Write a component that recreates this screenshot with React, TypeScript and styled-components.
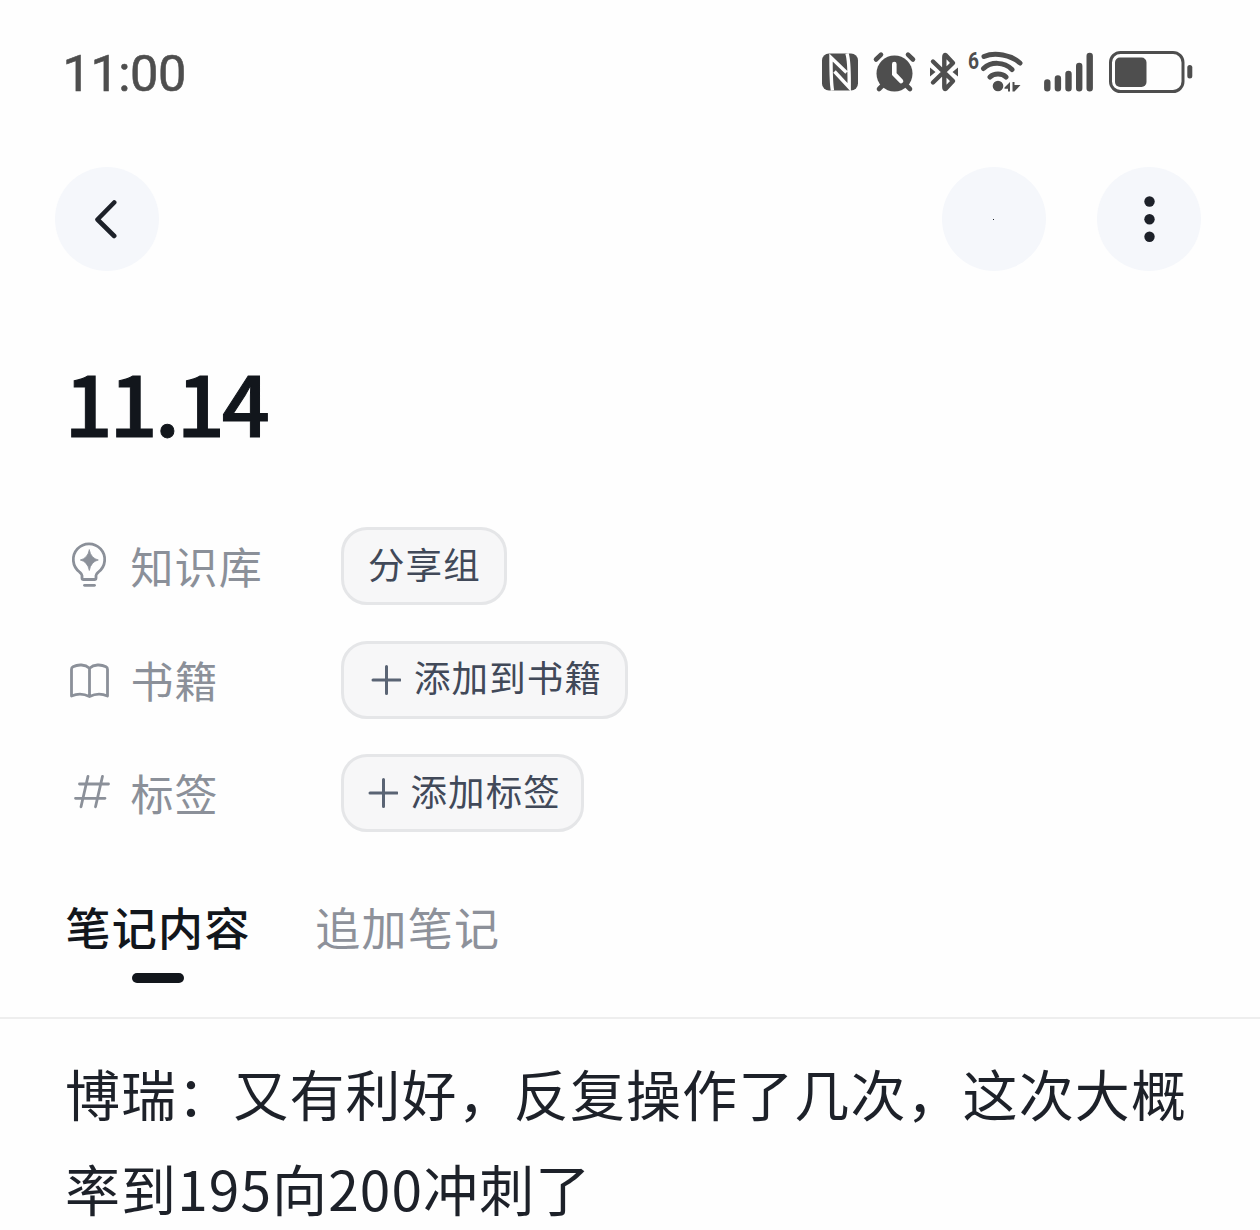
import React from 'react';
import styled, { createGlobalStyle } from 'styled-components';

const GlobalStyle = createGlobalStyle`
  *, *::before, *::after { box-sizing: border-box; }
  body { margin: 0; background: #fefefe; }
`;

const Screen = styled.div`
  width: 1260px;
  height: 1230px;
  overflow: hidden;
  display: flex;
  flex-direction: column;
  background: #fefefe;
  font-family: 'Noto Sans CJK SC', sans-serif;
  & > * { flex-shrink: 0; }
`;

const StatusBar = styled.header`
  height: 144px;
  padding: 0 67px 0 62.5px;
  display: flex;
  align-items: center;
  justify-content: space-between;
  color: #4e4e4e;
`;

const Clock = styled.span`
  font-family: Roboto, sans-serif;
  font-size: 50.5px;
  line-height: 60px;
  letter-spacing: -0.5px;
  margin-top: 4px;
  -webkit-text-stroke: 0.6px #4e4e4e;
`;

const StatusIcons = styled.div`
  display: flex;
  align-items: center;
`;

const Glyph = styled.svg<{ $ml?: number }>`
  display: block;
  flex: none;
  overflow: visible;
  margin-left: ${(p) => p.$ml ?? 0}px;
`;

const NavBar = styled.nav`
  height: 104px;
  margin-top: 23px;
  padding: 0 59px 0 55px;
  display: flex;
  gap: 51.5px;
`;

const RoundButton = styled.button`
  width: 104px;
  height: 104px;
  padding: 0;
  border: 0;
  border-radius: 50%;
  background: #f5f7fb;
  display: flex;
  align-items: center;
  justify-content: center;
  &:first-child { margin-right: auto; }
`;

const Speck = styled.span`
  width: 1px;
  height: 1px;
  background: #1d2129;
`;

const Title = styled.h1`
  margin: 69px 0 0 64.5px;
  height: 120px;
  font-size: 84.5px;
  line-height: 120px;
  font-weight: 500;
  letter-spacing: -3.1px;
  color: #12161c;
  -webkit-text-stroke: 1px #12161c;
`;

const Properties = styled.section`
  margin-top: 67px;
  padding-left: 66px;
  display: flex;
  flex-direction: column;
  gap: 35.6px;
`;

const Property = styled.div`
  display: flex;
  align-items: center;
  height: 78px;
`;

const IconSlot = styled.span`
  width: 46px;
  height: 78px;
  display: flex;
  align-items: center;
  justify-content: center;
`;

const Label = styled.span`
  width: 210.5px;
  margin-left: 18.5px;
  padding-bottom: 2px;
  font-size: 43px;
  line-height: 62px;
  letter-spacing: 1.1px;
  color: #8b9099;
`;

const Chip = styled.button<{ $w: number; $pad: number }>`
  width: ${(p) => p.$w}px;
  height: 78px;
  padding: 0 0 5px ${(p) => p.$pad}px;
  border: 3px solid #e5e6e8;
  border-radius: 26px;
  background: #f7f7f8;
  display: flex;
  align-items: center;
  font-family: inherit;
  font-size: 36.5px;
  letter-spacing: 1.1px;
  line-height: 54px;
  color: #414959;
  white-space: nowrap;
`;

const PlusIcon = styled.svg`
  display: block;
  margin: 5px 13px 0 -1px;
`;

const Tabs = styled.div`
  height: 186.8px;
  padding: 61.4px 0 0 65.5px;
  display: flex;
  gap: 64.5px;
  border-bottom: 2px solid #eeeeee;
`;

const Tab = styled.div<{ $active?: boolean }>`
  display: flex;
  flex-direction: column;
  align-items: center;
  font-size: 45px;
  line-height: 66px;
  letter-spacing: 1.3px;
  font-weight: ${(p) => (p.$active ? 500 : 400)};
  color: ${(p) => (p.$active ? '#12161c' : '#8d919a')};
`;

const Indicator = styled.span`
  width: 52px;
  height: 10px;
  margin-top: 13.2px;
  border-radius: 5px;
  background: #12161c;
`;

const Note = styled.p`
  margin: 26px 60px 0 65px;
  font-size: 55px;
  line-height: 95px;
  letter-spacing: 1.1px;
  color: #1d2129;
`;

const NfcIcon = () => (
  <Glyph width="36" height="38" viewBox="0 0 36 38">
    <rect x="0" y="0.5" width="36" height="37" rx="7" fill="currentColor" />
    <path d="M10.500 37.500C9 30 9 15 9 4.500L24.500 19.500M25 0.500C27.500 8 27.200 22 27.200 34.500L12.500 18.500" fill="none" stroke="#fefefe" strokeWidth="3.400" />
  </Glyph>
);

const AlarmIcon = () => (
  <Glyph $ml={16} width="41" height="40" viewBox="0 0 41 40" fill="none" stroke="currentColor" strokeLinecap="round">
    <circle cx="20.5" cy="21.5" r="18" fill="currentColor" stroke="none" />
    <path d="M2 7.500 7 2.700M39 7.500 34 2.700M5 37 9 33M36 37 32 33" strokeWidth="4.600" />
    <path d="M20.300 12V22L27 29" stroke="#fefefe" strokeWidth="4.600" />
  </Glyph>
);

const BluetoothIcon = () => (
  <Glyph $ml={15} width="28" height="40" viewBox="0 0 28 40" fill="none" stroke="currentColor" strokeLinecap="round" strokeLinejoin="round">
    <path d="M3 9.500 23 29 16 36.500Q14.300 38 14.300 35V5Q14.300 2 16 3.500L23 11 3 30.500" strokeWidth="4.400" />
    <path d="M0 15.500 5.500 20 0 24.500ZM28 15.500 22.500 20 28 24.500Z" fill="currentColor" stroke="none" />
  </Glyph>
);

const WifiIcon = () => (
  <Glyph $ml={10} width="55" height="42" viewBox="0 0 55 42" fill="none" stroke="currentColor" strokeLinecap="round">
    <text x="0" y="18" fontFamily="Roboto, sans-serif" fontSize="23.500" fontWeight="700" textLength="11" lengthAdjust="spacingAndGlyphs" fill="currentColor" stroke="none">6</text>
    <path d="M16 5.500C27 1 43 4 52 12M15.500 17.500C23 10.500 36 10.500 44 18.500M22 26C26 22 34 22 38 26" strokeWidth="5" />
    <circle cx="30" cy="35" r="5.300" fill="currentColor" stroke="none" />
    <path d="M36.500 36.500 42 31V40.500H40V37.800H36.500ZM44.500 31H46.500V34H52.500L46.500 40.500H44.500Z" fill="currentColor" stroke="none" />
  </Glyph>
);

const SignalIcon = () => (
  <Glyph $ml={21} width="49" height="40" viewBox="0 0 49 40" stroke="currentColor" strokeWidth="6.4" strokeLinecap="round">
    <path d="M3.300 30.500V36.300M13.900 26.500V36.300M24.500 22V36.300M35.200 14V36.300M45.700 4V36.300" />
  </Glyph>
);

const BatteryIcon = () => (
  <Glyph $ml={16} width="84" height="42" viewBox="0 0 84 42" fill="currentColor">
    <rect x="1.500" y="1.500" width="72.500" height="39" rx="10" fill="none" stroke="currentColor" strokeWidth="3" />
    <rect x="6" y="6.500" width="31.500" height="29.500" rx="5" />
    <rect x="78.300" y="14" width="5" height="13.500" rx="2.500" />
  </Glyph>
);

const BackIcon = () => (
  <svg width="30" height="40" viewBox="0 0 30 40">
    <path d="M22.200 3.500 5.500 20.500 22.200 37" fill="none" stroke="#1d2129" strokeWidth="4.600" strokeLinecap="round" strokeLinejoin="round" />
  </svg>
);

const MoreIcon = () => (
  <svg width="12" height="46" viewBox="0 0 12 46" fill="#1d2129">
    <circle cx="6.500" cy="5.500" r="5.200" />
    <circle cx="6.500" cy="23.200" r="5.200" />
    <circle cx="6.500" cy="40.700" r="5.200" />
  </svg>
);

const BulbIcon = () => (
  <svg width="46" height="50" viewBox="0 0 46 50" fill="none" stroke="#8b9099" strokeWidth="2.800" strokeLinecap="round" strokeLinejoin="round">
    <path d="M17.500 38.500Q16 38.500 16 37V34.500C16 33 15 32.300 13.500 31A15.700 15.700 0 1 1 32.500 31C31 32.300 30 33 30 34.500V37Q30 38.500 28.500 38.500Z" />
    <path d="M18.500 44.300H28.500" />
    <path d="M23.300 9Q25 17.300 32.300 19Q25 20.700 23.300 29.500Q21.600 20.700 14.300 19Q21.600 17.300 23.300 9Z" fill="#8b9099" stroke="#8b9099" strokeWidth="0.800" />
  </svg>
);

const BookIcon = () => (
  <svg width="46" height="40" viewBox="0 0 46 40" fill="none" stroke="#8b9099" strokeWidth="2.800" strokeLinecap="round" strokeLinejoin="round">
    <path d="M23.500 8.200C19 4.200 12 4.200 7 6.700Q5.500 7.500 5.500 9.200V36Q14.500 32 23.500 36.500Q32.500 32 41.500 36V9.200Q41.500 7.500 40 6.700C35 4.200 28 4.200 23.500 8.200V36.500" />
  </svg>
);

const HashIcon = () => (
  <svg width="46" height="40" viewBox="0 0 46 40" fill="none" stroke="#8b9099" strokeWidth="2.800" strokeLinecap="round">
    <path d="M13.500 11H42.500M9.500 25.300H39M22 3.300 15 33.800M36.500 3.300 29.500 33.800" />
  </svg>
);

const Plus = () => (
  <PlusIcon width="30" height="30" viewBox="0 0 30 30">
    <path d="M2 15H29M15.500 1.500V28.500" stroke="#5a6474" strokeWidth="3" strokeLinecap="round" />
  </PlusIcon>
);

const properties = [
  { label: '知识库', value: '分享组', Icon: BulbIcon, add: false, width: 166, pad: 24 },
  { label: '书籍', value: '添加到书籍', Icon: BookIcon, add: true, width: 287, pad: 28 },
  { label: '标签', value: '添加标签', Icon: HashIcon, add: true, width: 242.5, pad: 24.5 },
];

export default function App() {
  return (
    <Screen>
      <GlobalStyle />
      <StatusBar>
        <Clock>11:00</Clock>
        <StatusIcons>
          <NfcIcon />
          <AlarmIcon />
          <BluetoothIcon />
          <WifiIcon />
          <SignalIcon />
          <BatteryIcon />
        </StatusIcons>
      </StatusBar>
      <NavBar>
        <RoundButton><BackIcon /></RoundButton>
        <RoundButton><Speck /></RoundButton>
        <RoundButton><MoreIcon /></RoundButton>
      </NavBar>
      <Title>11.14</Title>
      <Properties>
        {properties.map(({ label, value, Icon, add, width, pad }) => (
          <Property key={label}>
            <IconSlot><Icon /></IconSlot>
            <Label>{label}</Label>
            <Chip $w={width} $pad={pad}>
              {add && <Plus />}
              {value}
            </Chip>
          </Property>
        ))}
      </Properties>
      <Tabs>
        <Tab $active>
          笔记内容
          <Indicator />
        </Tab>
        <Tab>追加笔记</Tab>
      </Tabs>
      <Note>博瑞：又有利好，反复操作了几次，这次大概率到195向200冲刺了</Note>
    </Screen>
  );
}
